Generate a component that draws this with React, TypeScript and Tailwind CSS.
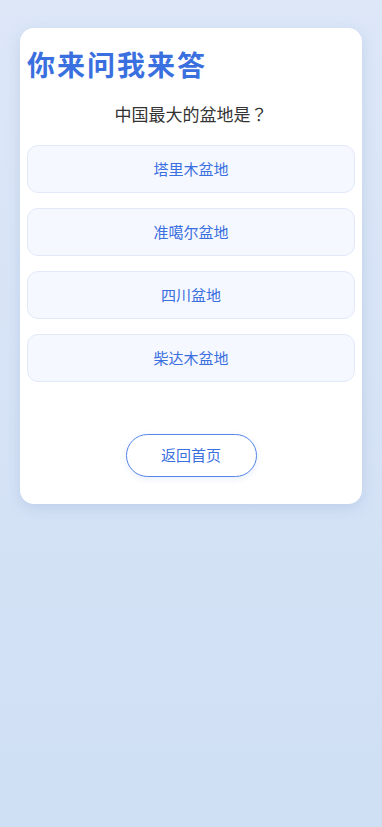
import React from "react";

export default function App() {
  const options = ["塔里木盆地", "准噶尔盆地", "四川盆地", "柴达木盆地"];
  return (
    <div
      className="min-h-[827px] w-full bg-gradient-to-b from-[#dde7f8] to-[#cfdff4] pt-[28px] px-[20px]"
      style={{ fontFamily: '"Noto Sans CJK SC", "Noto Sans", sans-serif' }}
    >
      <div className="bg-white rounded-[14px] shadow-[0_4px_14px_rgba(120,150,200,0.25)] px-[7px] pt-[14px] pb-[27px]">
        <h1 className="text-[28px] leading-[44px] font-bold text-[#3a6fe0] tracking-[2px]">
          你来问我来答
        </h1>
        <p className="mt-[16px] text-center text-[17px] leading-[24px] text-[#333]">
          中国最大的盆地是
          <span style={{ fontFamily: '"Noto Sans CJK TC", "Noto Sans CJK JP", sans-serif' }}>？</span>
        </p>
        <div className="mt-[19px] flex flex-col gap-[15px]">
          {options.map((o) => (
            <div
              key={o}
              className="h-[48px] flex items-center justify-center rounded-[11px] border border-[#e1e9f9] bg-[#f5f8ff] text-[15px] text-[#3a6fe0]"
            >
              {o}
            </div>
          ))}
        </div>
        <div className="mt-[52px] flex justify-center">
          <button className="w-[131px] h-[43px] rounded-full border border-[#5585e8] text-[15px] text-[#3a6fe0] bg-white shadow-[0_2px_6px_rgba(100,140,220,0.15)]">
            返回首页
          </button>
        </div>
      </div>
    </div>
  );
}
